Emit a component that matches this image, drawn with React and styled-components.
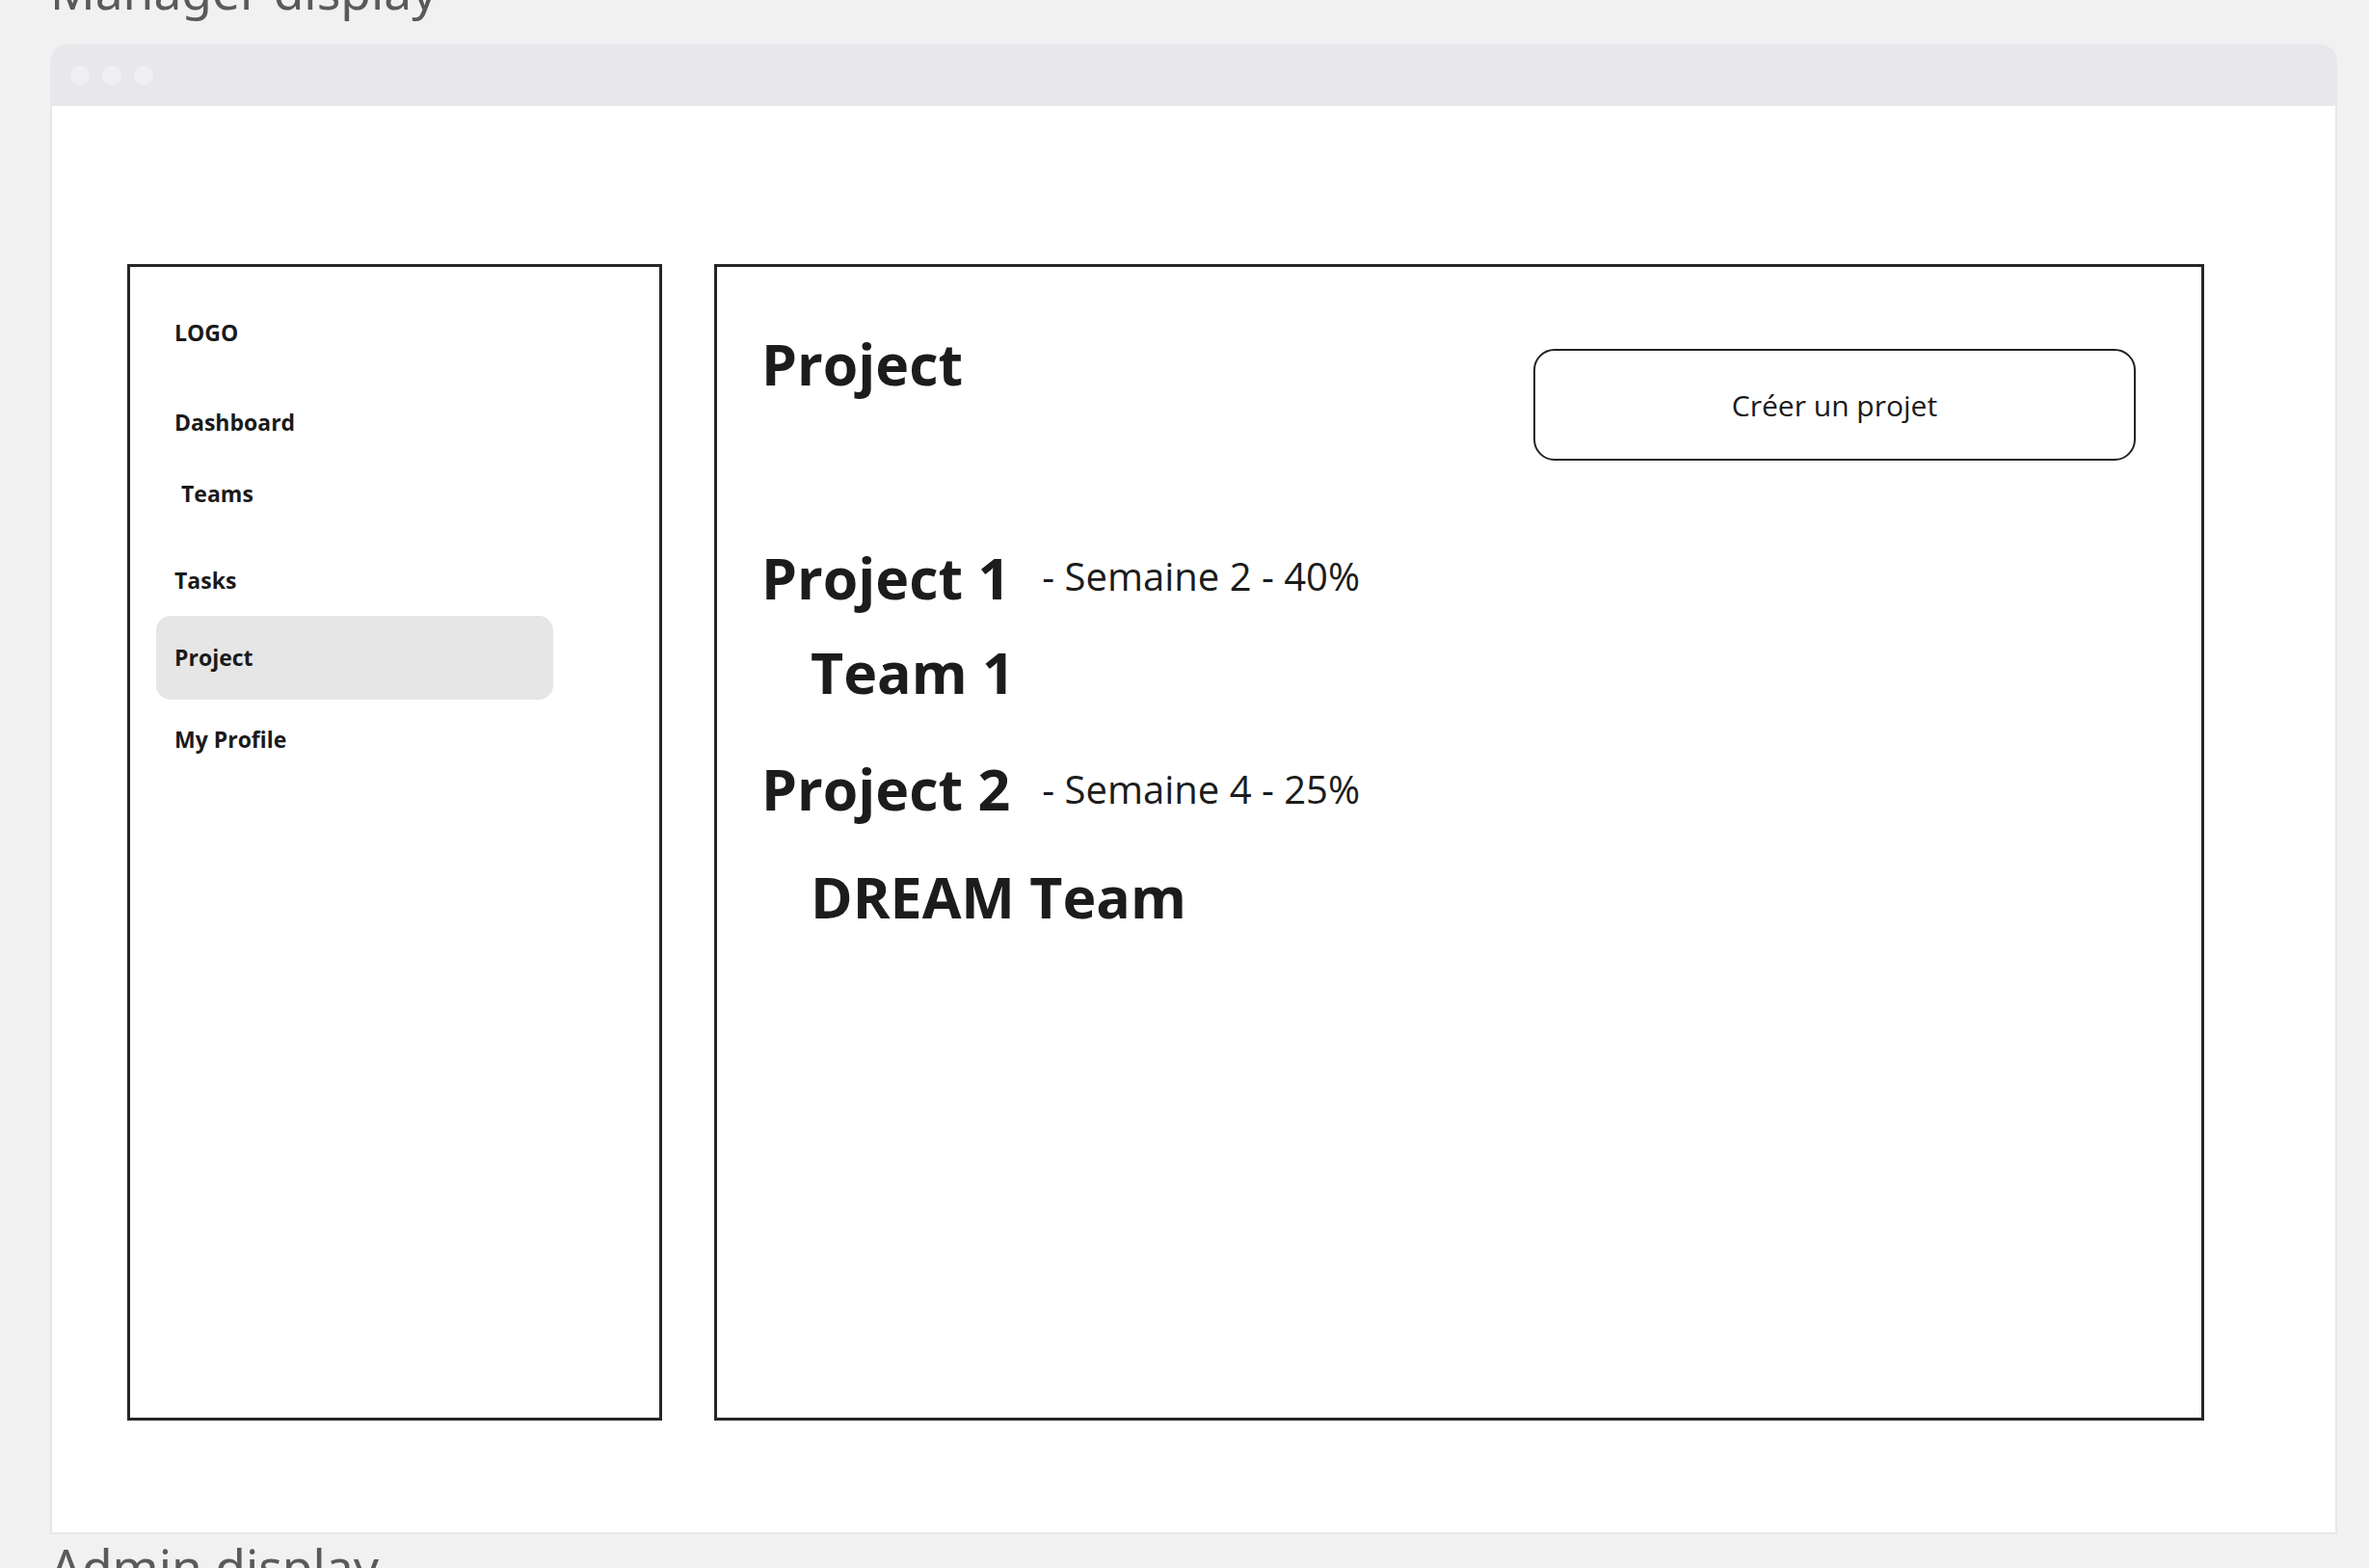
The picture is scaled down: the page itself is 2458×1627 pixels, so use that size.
import React from 'react';
import styled, { createGlobalStyle } from 'styled-components';

const GlobalStyle = createGlobalStyle`
  html,
  body {
    margin: 0;
    padding: 0;
    background: #f1f1f1;
    overflow: hidden;
  }

  body {
    font-family: 'Open Sans', 'Noto Sans', sans-serif;
    color: #1c1c1c;
  }
`;

const StyledPage = styled.div`
  padding: 0 33px 0 52px;
`;

const SectionTitle = styled.h2`
  margin: ${({ $top }) => $top}px 0 0 0;
  font-family: 'Noto Sans', 'Open Sans', sans-serif;
  font-size: 51.5px;
  font-weight: 400;
  line-height: 50px;
  color: #5a5a5a;
  white-space: nowrap;
`;

const BrowserFrame = styled.div`
  margin-top: 31px;
  width: 2373px;
`;

const TitleBar = styled.div`
  display: flex;
  align-items: center;
  gap: 13px;
  height: 64px;
  padding-left: 21px;
  box-sizing: border-box;
  background: #e8e8ec;
  border-radius: 18px 18px 0 0;
`;

const Dot = styled.span`
  width: 20px;
  height: 20px;
  border-radius: 50%;
  background: #f0f0f3;
`;

const Viewport = styled.div`
  display: flex;
  gap: 54px;
  height: 1482px;
  box-sizing: border-box;
  padding: 164px 0 0 78px;
  background: #fff;
  border: 2px solid #e6e7eb;
  border-top: 0;
`;

const Sidebar = styled.nav`
  display: flex;
  flex-direction: column;
  width: 555px;
  height: 1200px;
  box-sizing: border-box;
  padding: 36px 0 0 27px;
  border: 3px solid #262626;
`;

const NavItem = styled.div`
  width: 412px;
  height: ${({ $active }) => ($active ? 87 : 64)}px;
  margin-top: ${({ $space }) => $space}px;
  box-sizing: border-box;
  padding-left: ${({ $indent }) => 19 + $indent}px;
  border-radius: 15px;
  background: ${({ $active }) => ($active ? '#e6e6e6' : 'transparent')};
  font-size: 23px;
  font-weight: 700;
  line-height: ${({ $active }) => ($active ? 87 : 64)}px;
  color: #1a1a1a;
  white-space: nowrap;
`;

const MainPanel = styled.main`
  width: 1546px;
  height: 1200px;
  box-sizing: border-box;
  padding: 65px 68px 0 46px;
  border: 3px solid #262626;
`;

const Header = styled.div`
  display: flex;
  justify-content: space-between;
  align-items: flex-start;
`;

const Heading = styled.h1`
  margin: 0;
  font-size: 59px;
  font-weight: 700;
  line-height: 70px;
`;

const CreateButton = styled.button`
  width: 625px;
  height: 116px;
  margin-top: 20px;
  border: 2px solid #222;
  border-radius: 22px;
  background: #fff;
  font-family: 'Open Sans', 'Noto Sans', sans-serif;
  font-size: 30px;
  font-weight: 400;
  color: #1a1a1a;
  cursor: pointer;
`;

const ProjectRow = styled.div`
  display: flex;
  align-items: flex-start;
  gap: 33px;
  margin-top: ${({ $space }) => $space}px;
`;

const ProjectName = styled.span`
  font-size: 59px;
  font-weight: 700;
  line-height: 70px;
  white-space: nowrap;
`;

const ProjectMeta = styled.span`
  margin-top: ${({ $drop }) => $drop}px;
  font-size: 40px;
  font-weight: 400;
  line-height: 48px;
  white-space: nowrap;
`;

const TeamName = styled.div`
  margin-top: ${({ $space }) => $space}px;
  padding-left: 51px;
  font-size: 59px;
  font-weight: 700;
  line-height: 70px;
  white-space: nowrap;
`;

const navItems = [
  { label: 'LOGO', space: 0 },
  { label: 'Dashboard', space: 29 },
  { label: 'Teams', space: 10, indent: 7 },
  { label: 'Tasks', space: 26 },
  { label: 'Project', space: 5, active: true },
  { label: 'My Profile', space: 9 },
];

const projects = [
  { name: 'Project 1', meta: '- Semaine 2 - 40%', team: 'Team 1', space: 86, teamSpace: 28, drop: 10 },
  { name: 'Project 2', meta: '- Semaine 4 - 25%', team: 'DREAM Team', space: 51, teamSpace: 42, drop: 12 },
];

const App = () => (
  <>
    <GlobalStyle />
    <StyledPage>
      <SectionTitle $top={-35}>Manager display</SectionTitle>

      <BrowserFrame>
        <TitleBar>
          <Dot />
          <Dot />
          <Dot />
        </TitleBar>

        <Viewport>
          <Sidebar>
            {navItems.map(item => (
              <NavItem
                key={item.label}
                $space={item.space}
                $indent={item.indent || 0}
                $active={item.active}>
                {item.label}
              </NavItem>
            ))}
          </Sidebar>

          <MainPanel>
            <Header>
              <Heading>Project</Heading>
              <CreateButton>Créer un projet</CreateButton>
            </Header>

            {projects.map(p => (
              <React.Fragment key={p.name}>
                <ProjectRow $space={p.space}>
                  <ProjectName>{p.name}</ProjectName>
                  <ProjectMeta $drop={p.drop}>{p.meta}</ProjectMeta>
                </ProjectRow>
                <TeamName $space={p.teamSpace}>{p.team}</TeamName>
              </React.Fragment>
            ))}
          </MainPanel>
        </Viewport>
      </BrowserFrame>

      <SectionTitle $top={8}>Admin display</SectionTitle>
    </StyledPage>
  </>
);

export default App;
